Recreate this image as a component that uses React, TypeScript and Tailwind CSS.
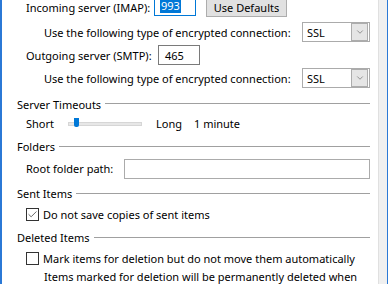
import { Check, ChevronDown } from 'lucide-react'

function Group({ title }: { title: string }) {
  return (
    <div className="h-[16px] flex items-center gap-[4px]">
      <span className="leading-none whitespace-nowrap">{title}</span>
      <div className="flex-1 h-px bg-[#a0a0a0] mt-[-1px]" />
    </div>
  )
}

function SslSelect() {
  return (
    <div className="shrink-0 w-[68px] h-[20px] border border-[#ababab] bg-white flex items-center">
      <span className="flex-1 pl-[4px] leading-none">SSL</span>
      <div className="w-[17px] h-[18px] bg-[#e5e5e5] border border-[#acacac] flex items-center justify-center mr-px">
        <ChevronDown size={10} strokeWidth={1.5} className="text-[#606060]" />
      </div>
    </div>
  )
}

function Box({ checked }: { checked?: boolean }) {
  return (
    <div className="shrink-0 w-[13px] h-[13px] border border-[#333333] bg-white flex items-center justify-center">
      {checked && <Check size={11} strokeWidth={1.75} className="text-[#444444]" />}
    </div>
  )
}

export default function App() {
  return (
    <div className="w-[388px] h-[284px] overflow-hidden flex bg-white text-[11px] text-black" style={{ fontFamily: '"Noto Sans", sans-serif' }}>
      <div className="w-[2px] shrink-0 bg-[#2b79d6]" />
      <div className="flex-1 min-w-0 flex flex-col pl-[15px] pr-[8px]">
        <div className="-mt-[6px] h-[23px] flex items-center pl-[9px] whitespace-nowrap">
          <span className="w-[128px] shrink-0 leading-none mt-[4px]">Incoming server (IMAP):</span>
          <div className="shrink-0 w-[42px] h-[21px] border border-[#0078d7] flex items-end pb-[2px] pl-[5px]">
            <span className="bg-[#0078d7] text-white leading-[14px] px-px">993</span>
          </div>
          <button className="shrink-0 ml-[10px] w-[81px] h-[23px] bg-[#e1e1e1] border border-[#adadad] leading-none pt-[4px]">Use Defaults</button>
        </div>
        <div className="mt-[5px] h-[20px] flex items-center pl-[27px] whitespace-nowrap">
          <span className="flex-1 leading-none">Use the following type of encrypted connection:</span>
          <SslSelect />
        </div>
        <div className="mt-[3px] h-[20px] flex items-center pl-[9px] whitespace-nowrap">
          <span className="w-[132px] shrink-0 leading-none">Outgoing server (SMTP):</span>
          <div className="shrink-0 w-[42px] h-[20px] border border-[#7a7a7a] flex items-center pl-[6px] leading-none">465</div>
        </div>
        <div className="mt-[3px] h-[20px] flex items-center pl-[27px] whitespace-nowrap">
          <span className="flex-1 leading-none">Use the following type of encrypted connection:</span>
          <SslSelect />
        </div>
        <div className="mt-[8px]"><Group title="Server Timeouts" /></div>
        <div className="mt-[4px] h-[16px] flex items-center pl-[9px] whitespace-nowrap">
          <span className="w-[42px] shrink-0 leading-none">Short</span>
          <div className="relative shrink-0 w-[74px] h-[4px] bg-[#e7e7e7] border border-[#d6d6d6]">
            <div className="absolute left-[5px] top-[-5px] w-[5px] h-[9px] bg-[#0078d7] rounded-b-[2px]" />
          </div>
          <span className="ml-[14px] leading-none">Long</span>
          <span className="ml-[12px] leading-none">1 minute</span>
        </div>
        <div className="mt-[7px]"><Group title="Folders" /></div>
        <div className="mt-[4px] h-[20px] flex items-center pl-[9px] whitespace-nowrap">
          <span className="w-[98px] shrink-0 leading-none">Root folder path:</span>
          <div className="flex-1 h-[20px] border border-[#ababab]" />
        </div>
        <div className="mt-[7px]"><Group title="Sent Items" /></div>
        <div className="mt-[5px] h-[16px] flex items-center gap-[4px] pl-[9px] whitespace-nowrap">
          <Box checked />
          <span className="leading-none">Do not save copies of sent items</span>
        </div>
        <div className="mt-[7px]"><Group title="Deleted Items" /></div>
        <div className="mt-[5px] h-[16px] flex items-center gap-[4px] pl-[9px] whitespace-nowrap">
          <Box />
          <span className="leading-none">Mark items for deletion but do not move them automatically</span>
        </div>
        <div className="mt-[2px] h-[16px] flex items-center pl-[27px] whitespace-nowrap">
          <span className="leading-none">Items marked for deletion will be permanently deleted when</span>
        </div>
      </div>
      <div className="w-[9px] shrink-0 bg-[#f0f0f0] border-l border-[#e0e0e0]" />
      <div className="w-[1px] shrink-0 bg-[#2b79d6]" />
    </div>
  )
}
